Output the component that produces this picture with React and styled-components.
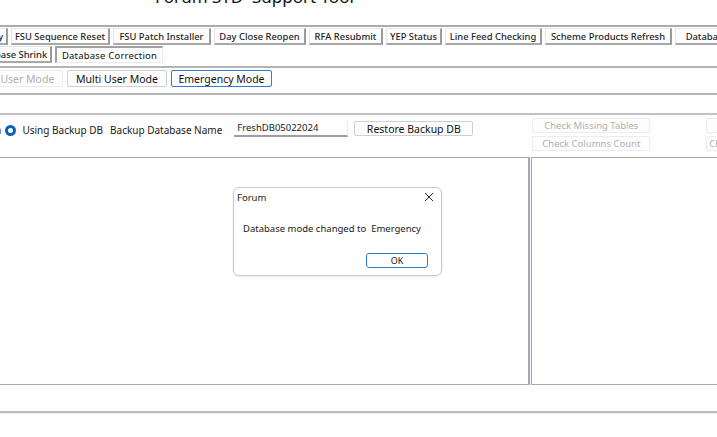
import React from "react";
import styled, { createGlobalStyle } from "styled-components";

const GlobalStyle = createGlobalStyle`
  html, body {
    margin: 0;
    padding: 0;
    background: #ffffff;
    overflow: hidden;
  }
  body {
    font-family: "Noto Sans", "Open Sans", sans-serif;
    color: #1a1a1a;
  }
`;

const Window = styled.div`
  width: 717px;
  height: 437px;
  position: relative;
  overflow: hidden;
  background: #fefefe;
  font-size: 9.5px;
  white-space: nowrap;
`;

const Title = styled.div`
  height: 25px;
  padding-left: 155px;
  font-size: 17px;
  line-height: 17px;
  margin-top: -12px;
  margin-bottom: 12px;
  color: #111;
  white-space: pre;
`;

const TabStrip = styled.div`
  border-top: 2px solid #acacac;
  padding-top: 1px;
  display: flex;
  flex-direction: column;
  gap: 1px;
`;

const TabRow = styled.div`
  display: flex;
  gap: 3px;
  margin-left: ${(p) => p.$shift}px;
`;

const Tab = styled.div`
  flex: none;
  width: ${(p) => p.$w}px;
  height: 17px;
  box-sizing: border-box;
  display: flex;
  align-items: center;
  justify-content: center;
  background: #fdfdfd;
  border-top: 1px solid #e6e6e6;
  border-left: 1px solid #e6e6e6;
  border-right: 2px solid #9a9a9a;
  border-bottom: 2px solid #a8a8a8;
  font-weight: 500;
  font-size: 9.4px;
  color: #1f1f1f;
  overflow: hidden;

  &[data-active="true"] {
    border-top: 2px solid #a0a0a0;
    border-left: 2px solid #a0a0a0;
    border-right: 1px solid #ececec;
    border-bottom: 1px solid #ececec;
    font-weight: 400;
    font-size: 9.5px;
    letter-spacing: 0.2px;
    color: #111;
  }
`;

const ModeBar = styled.div`
  margin-top: 3px;
  border-top: 2px solid #b4b4b4;
  border-bottom: 2px solid #b4b4b4;
  height: 23px;
  padding-top: 2px;
  display: flex;
  gap: 4px;
  margin-left: -41px;
`;

const Button = styled.div`
  flex: none;
  width: ${(p) => p.$w}px;
  height: ${(p) => p.$h || 17}px;
  box-sizing: border-box;
  display: flex;
  align-items: center;
  justify-content: ${(p) => (p.$start ? "flex-start" : "center")};
  padding-left: ${(p) => (p.$start ? 2 : 0)}px;
  background: #fdfdfd;
  border: 1px solid #cfcfcf;
  border-radius: 2px;
  font-size: 10.5px;
  color: #111;
  overflow: hidden;

  &[data-state="disabled"] {
    color: #b0b0b0;
    border-color: #ececec;
    font-size: 9.5px;
  }
  &[data-state="focus"] {
    border-color: #2a7fd4;
  }
`;

const BackupBar = styled.div`
  margin-top: 18px;
  border-top: 2px solid #c2c2c2;
  height: 42px;
  display: flex;
  align-items: flex-start;
  font-size: 10px;
`;

const RadioGroup = styled.div`
  flex: none;
  display: flex;
  align-items: center;
  margin-left: -18px;
  margin-top: 8px;
  gap: 4px;
`;

const PartLabel = styled.span`
  color: #5a2525;
`;

const RadioDot = styled.span`
  width: 11px;
  height: 11px;
  border-radius: 50%;
  box-sizing: border-box;
  border: 3px solid #0b5fc4;
  background: #fff;
  margin-right: 2px;
`;

const FieldLabel = styled.span`
  flex: none;
  margin-left: 7px;
  margin-top: 8px;
`;

const TextBox = styled.div`
  flex: none;
  width: 114px;
  height: 17px;
  box-sizing: border-box;
  margin-left: 12px;
  margin-top: 5px;
  border-bottom: 2px solid #9c9c9c;
  border-right: 1px solid #ededed;
  padding-left: 3px;
  display: flex;
  align-items: center;
  font-size: 9.5px;
`;

const RestoreWrap = styled.div`
  flex: none;
  margin-left: 6px;
  margin-top: 6px;
`;

const CheckStack = styled.div`
  flex: none;
  display: flex;
  flex-direction: column;
  gap: 3px;
  margin-top: 3px;
  margin-left: ${(p) => p.$ml}px;
`;

const Panels = styled.div`
  display: flex;
  gap: 1px;
  height: 228px;
`;

const Panel = styled.div`
  flex: ${(p) => (p.$fixed ? "none" : "1")};
  width: ${(p) => (p.$fixed ? `${p.$fixed}px` : "auto")};
  box-sizing: border-box;
  border: 1px solid #a6a6b4;
  border-left: ${(p) => (p.$edge ? "none" : "1px solid #a6a6b4")};
  border-right: ${(p) => (p.$open ? "none" : "2px solid #a6a6b4")};
  background: #fff;
`;

const Footer = styled.div`
  margin-top: 26px;
  border-top: 2px solid #b8b8b8;
  border-bottom: 1px solid #f0f0f0;
`;

const Dialog = styled.div`
  position: absolute;
  left: 233px;
  top: 187px;
  width: 209px;
  height: 89px;
  box-sizing: border-box;
  border: 1px solid #c9c9c9;
  border-radius: 6px;
  background: #fff;
  box-shadow: 0 1px 3px rgba(0, 0, 0, 0.08);
  font-size: 9.5px;
`;

const DialogHead = styled.div`
  display: flex;
  justify-content: space-between;
  align-items: center;
  padding: 2px 7px 0 3px;
  height: 14px;
`;

const Message = styled.div`
  margin: 18px 0 0 9px;
  white-space: pre;
`;

const DialogFoot = styled.div`
  display: flex;
  justify-content: flex-end;
  padding: 18px 13px 0 0;
`;

const OkButton = styled.div`
  width: 62px;
  height: 15px;
  box-sizing: border-box;
  border: 1px solid #2a7fd4;
  border-radius: 3px;
  display: flex;
  align-items: center;
  justify-content: center;
  font-size: 9px;
`;

const CloseIcon = () => (
  <svg width="10" height="10" viewBox="0 0 10 10">
    <path d="M1 1 L9 9 M9 1 L1 9" stroke="#222" strokeWidth="1" />
  </svg>
);

export default function App() {
  return (
    <>
      <GlobalStyle />
      <Window>
        <Title>Forum STD  Support Tool</Title>
        <TabStrip>
          <TabRow $shift={-86}>
            <Tab $w={94}>Database Recovery</Tab>
            <Tab $w={99}>FSU Sequence Reset</Tab>
            <Tab $w={98}>FSU Patch Installer</Tab>
            <Tab $w={92}>Day Close Reopen</Tab>
            <Tab $w={74}>RFA Resubmit</Tab>
            <Tab $w={56}>YEP Status</Tab>
            <Tab $w={97}>Line Feed Checking</Tab>
            <Tab $w={127}>Scheme Products Refresh</Tab>
            <Tab $w={100}>Database Backup</Tab>
          </TabRow>
          <TabRow $shift={-30}>
            <Tab $w={82}>Database Shrink</Tab>
            <Tab $w={108} data-active="true">
              Database Correction
            </Tab>
          </TabRow>
        </TabStrip>
        <ModeBar>
          <Button $w={104} data-state="disabled" style={{ fontSize: 10.5 }}>
            Single User Mode
          </Button>
          <Button $w={100}>Multi User Mode</Button>
          <Button $w={101} data-state="focus">
            Emergency Mode
          </Button>
        </ModeBar>
        <BackupBar>
          <RadioGroup>
            <PartLabel>DBa</PartLabel>
            <RadioDot />
            <span>Using Backup DB</span>
          </RadioGroup>
          <FieldLabel>Backup Database Name</FieldLabel>
          <TextBox>FreshDB05022024</TextBox>
          <RestoreWrap>
            <Button $w={119} $h={15}>
              Restore Backup DB
            </Button>
          </RestoreWrap>
          <CheckStack $ml={59}>
            <Button $w={118} $h={15} data-state="disabled">
              Check Missing Tables
            </Button>
            <Button $w={118} $h={15} data-state="disabled">
              Check Columns Count
            </Button>
          </CheckStack>
          <CheckStack $ml={56}>
            <Button $w={60} $h={15} data-state="disabled" />
            <Button $w={60} $h={15} data-state="disabled" $start>
              Check Indexes
            </Button>
          </CheckStack>
        </BackupBar>
        <Panels>
          <Panel $fixed={530} $edge />
          <Panel $open />
        </Panels>
        <Footer />
        <Dialog>
          <DialogHead>
            <span>Forum</span>
            <CloseIcon />
          </DialogHead>
          <Message>Database mode changed to  Emergency</Message>
          <DialogFoot>
            <OkButton>OK</OkButton>
          </DialogFoot>
        </Dialog>
      </Window>
    </>
  );
}
